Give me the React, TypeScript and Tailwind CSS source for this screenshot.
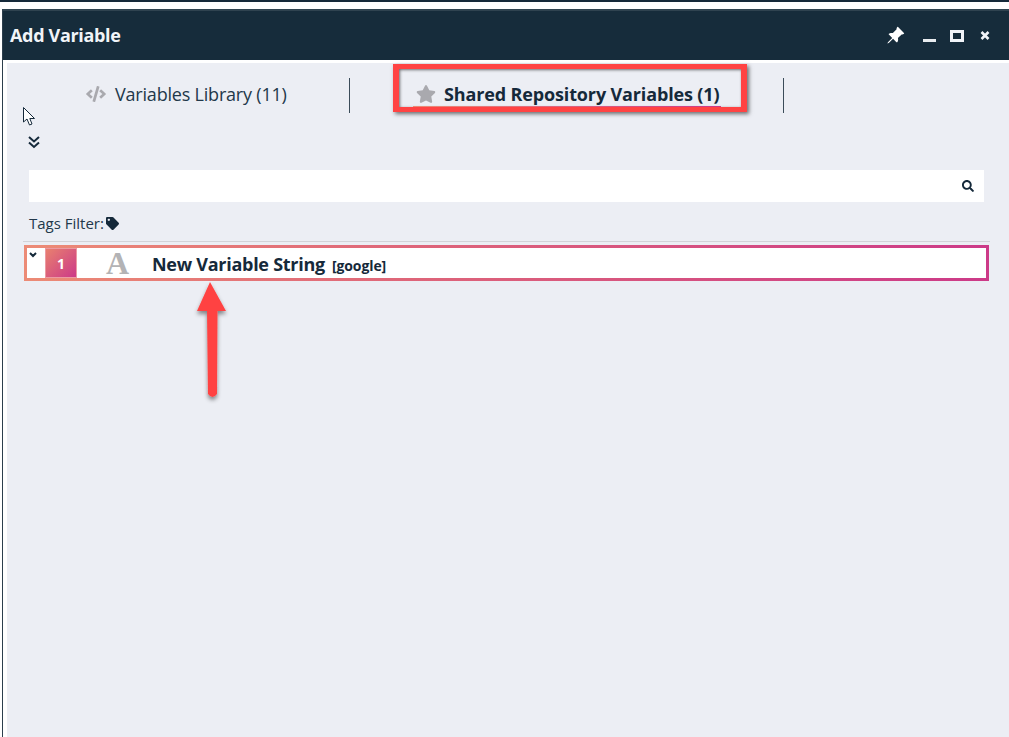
import { FaStar, FaCode, FaTag, FaSearch } from "react-icons/fa";
import { BsPinAngleFill } from "react-icons/bs";

export default function App() {
  return (
    <div className="relative h-[737px] w-[1009px] overflow-hidden bg-white font-['Open_Sans',sans-serif] text-[#15293a]">
      <div className="h-[2px] bg-[#15293a]" />
      <div className="h-[7px] bg-white" />
      <div className="flex h-[728px]">
        <div className="w-[2px] shrink-0 bg-white" />
        <div className="flex min-w-0 flex-1 flex-col border-l border-[#2c3e4c]">
          <div className="flex h-[51px] shrink-0 items-center justify-between border-t-2 border-[#2f4350] bg-[#162c3b] pl-[7px] pr-[19px]">
            <span className="text-[18px] font-bold tracking-[-0.33px] text-[#f1f4f8]">Add Variable</span>
            <div className="flex items-center text-white">
              <BsPinAngleFill className="mr-[18px] h-[19px] w-[19px]" />
              <div className="mr-[14px] mt-[10px] h-[3px] w-[13px] bg-[#e8ecef]" />
              <div className="mr-[16px] h-[12px] w-[14px] border-[3px] border-[#f1f4f8]" />
              <svg width="10" height="9" viewBox="0 0 10 9" fill="none" stroke="#f1f4f8" strokeWidth="2.6">
                <path d="M1.5 1l7 7M8.5 1l-7 7" />
              </svg>
            </div>
          </div>
          <div className="flex min-h-0 flex-1 flex-col border-l-[4px] border-t-[3px] border-white bg-[#eceef4]">
            <div className="mt-[15px] flex h-[35px] shrink-0 items-center">
              <div className="flex h-[35px] w-[343px] items-center border-r border-[#3b4c59] pb-[3px] pl-[78px]">
                <FaCode className="mr-[8px] h-[16px] w-[22px] text-[#a9a9ae]" />
                <span className="text-[18px] tracking-[-0.2px] text-[#22384a]">Variables Library (11)</span>
              </div>
              <div className="flex h-[35px] w-[434px] items-center border-r border-[#3b4c59] pb-[3px] pl-[66px]">
                <FaStar className="mr-[8px] h-[20px] w-[20px] text-[#a9a9ae]" />
                <span className="text-[18px] font-bold tracking-[-0.14px]">Shared Repository Variables (1)</span>
              </div>
            </div>
            <div className="mt-[22px] flex h-[14px] pl-[20px]">
              <svg width="14" height="14" viewBox="0 0 14 14" fill="none" stroke="#15293a" strokeWidth="2">
                <path d="M2 2l5 4.5L12 2M2 7.5l5 4.5 5-4.5" />
              </svg>
            </div>
            <div className="ml-[22px] mr-[25px] mt-[21px] flex h-[32px] shrink-0 items-center justify-end bg-white pr-[10px]">
              <FaSearch className="h-[12px] w-[12px]" />
            </div>
            <div className="ml-[22px] mt-[11px] flex h-[22px] items-center pb-[2px] text-[15px] text-[#22384a]">
              Tags Filter:
              <FaTag className="ml-[2px] mt-[1px] h-[13px] w-[13px] text-[#15293a]" />
            </div>
            <div className="ml-[16px] mr-[19px] mt-[6px] h-[1px] bg-[#d2d3d8]" />
            <div className="ml-[17px] mr-[20px] mt-[3px] h-[36px] bg-[linear-gradient(90deg,#ec8b76,#de6579_40%,#cc3a88)] p-[3px]">
              <div className="flex h-full items-center bg-white">
                <div className="relative -top-[8px] flex w-[18px] pl-[2px]">
                  <svg width="8" height="6" viewBox="0 0 8 6" fill="none" stroke="#15293a" strokeWidth="2">
                    <path d="M1 1l3 3 3-3" />
                  </svg>
                </div>
                <div className="flex h-[30px] w-[32px] items-center justify-center border border-[#ec9aa3] bg-[linear-gradient(135deg,#e8806f,#cc3a88)] text-[14px] font-bold text-white">1</div>
                <span className="ml-[29px] w-[46px] font-['Liberation_Serif',serif] text-[32px] font-bold leading-none text-[#b3b3b5]">A</span>
                <span className="mt-[2px] text-[18px] font-bold tracking-[-0.27px]">New Variable String</span>
                <span className="ml-[7px] mt-[5px] text-[14px] font-bold tracking-[-0.1px]">[google]</span>
              </div>
            </div>
          </div>
        </div>
      </div>

      {/* annotation: red rectangle */}
      <div className="absolute left-[393px] top-[64px] h-[48px] w-[354px] border-x-[6px] border-y-[5px] border-[#ff4343] shadow-[2px_2px_4px_rgba(0,0,0,0.55),inset_1px_1px_3px_rgba(0,0,0,0.55)]" />
      <div className="absolute left-[413px] top-[106px] h-[1px] w-[308px] bg-[linear-gradient(90deg,#ec8b76,#cc3a88)]" />

      {/* annotation: arrow */}
      <svg className="absolute left-[190px] top-[278px]" width="46" height="130" viewBox="0 0 46 130">
        <defs>
          <filter id="s" x="-30%" y="-10%" width="160%" height="125%">
            <feDropShadow dx="0" dy="3" stdDeviation="2" floodColor="#000" floodOpacity="0.45" />
          </filter>
        </defs>
        <path d="M20 4 L36 33 L27.5 33 L27 116 Q22.5 122 18 116 L17 33 L7 33 Z" fill="#ff4343" filter="url(#s)" />
      </svg>

      {/* annotation: pointer */}
      <svg className="absolute left-[23px] top-[107px]" width="14" height="20" viewBox="0 0 14 20">
        <path d="M0.5 0.5 V15 L4 12 L6.5 18 L9 17 L6.8 11.5 L11.5 11.5 Z" fill="#fff" stroke="#15293a" strokeWidth="1" />
      </svg>
    </div>
  );
}
